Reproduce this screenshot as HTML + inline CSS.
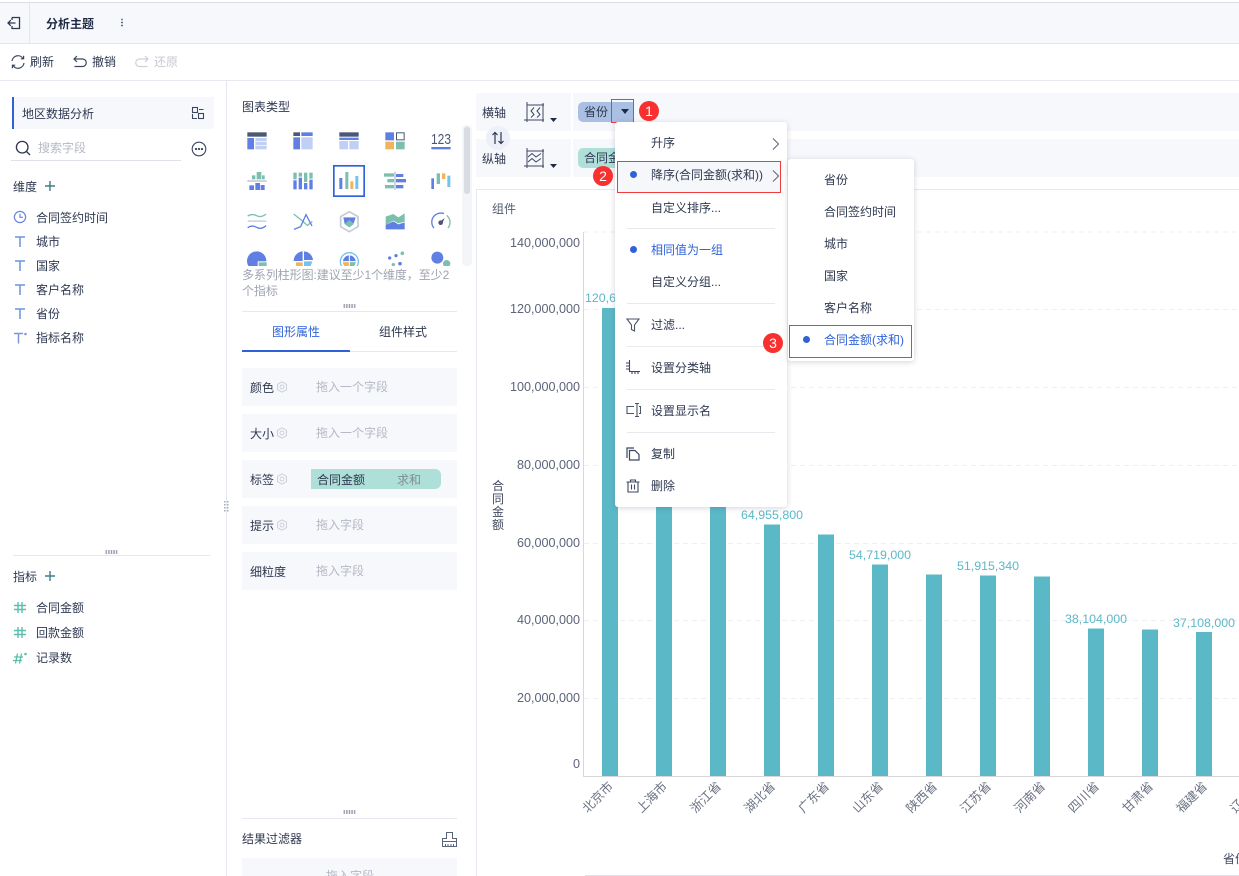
<!DOCTYPE html>
<html><head><meta charset="utf-8">
<style>
html,body{margin:0;padding:0;background:#fff}
body{position:relative;width:1239px;height:876px;overflow:hidden;font:12px/18px "Liberation Sans","Noto Sans CJK SC",sans-serif;color:#2e3850}
.t{position:absolute;white-space:nowrap;line-height:18px;margin-top:1px}
.b{position:absolute}
.g{color:#b5b9c5;margin-top:0}
.blue{color:#2f62d9}
svg{position:absolute;overflow:hidden}
.dot{position:absolute;width:7px;height:7px;border-radius:50%;background:#2f62d9}
.badge{position:absolute;width:20px;height:20px;border-radius:50%;background:#f8302f;color:#fff;text-align:center;line-height:20px;font-size:14px}
.sep{position:absolute;left:627px;width:148px;height:1px;background:#e8e9ef}
.row{position:absolute;left:242px;width:215px;height:38px;background:#f7f8fc}
.grips{position:absolute;width:13px;height:4px;background-image:radial-gradient(circle,#7d8394 .7px,transparent .9px);background-size:2.6px 2px}
</style></head><body>

<!-- top header -->
<div class="b" style="left:0;top:2px;width:1239px;height:1px;background:#dcdee5"></div>
<div class="b" style="left:0;top:3px;width:1239px;height:40px;background:#f7f8fc"></div>
<div class="b" style="left:0;top:43px;width:1239px;height:1px;background:#e4e6ec"></div>
<div class="b" style="left:29px;top:3px;width:1px;height:40px;background:#e4e6ec"></div>
<div class="b" style="left:0;top:80px;width:1239px;height:1px;background:#e8e9f0"></div>
<svg style="left:6px;top:15px" width="16" height="16" viewBox="0 0 16 16" fill="none" stroke="#2e3850" stroke-width="1.3"><path d="M6 2.500H13.500V13.500H6V11M6 5V2.500M9.500 8H2M4.800 5.200L2 8L4.800 10.800"/></svg>
<div class="t" style="left:46px;top:14px;font-weight:bold;color:#1f2a44">分析主题</div>
<svg style="left:119px;top:17px" width="6" height="11"><circle cx="3" cy="2.500" r=".9" fill="#2f62d9"/><circle cx="3" cy="5.500" r=".9" fill="#3b4660"/><circle cx="3" cy="8.500" r=".9" fill="#3b4660"/></svg>

<!-- toolbar -->
<svg style="left:10px;top:54px" width="16" height="16" viewBox="0 0 16 16" fill="none" stroke="#3b4660" stroke-width="1.2"><path d="M2 7A6 6 0 0 1 13 4.500M14 9A6 6 0 0 1 3 11.500"/><path d="M13.600 1.800V4.800H10.800M2.400 14.200V11.200H5.200"/></svg>
<div class="t" style="left:30px;top:52px">刷新</div>
<svg style="left:72px;top:54px" width="16" height="16" viewBox="0 0 16 16" fill="none" stroke="#3b4660" stroke-width="1.2"><path d="M5 2L2 5L5 8M2 5H10.500A3.600 3.600 0 0 1 10.500 12.500H2.500"/></svg>
<div class="t" style="left:92px;top:52px">撤销</div>
<svg style="left:134px;top:54px" width="16" height="16" viewBox="0 0 16 16" fill="none" stroke="#cdd0d8" stroke-width="1.2"><path d="M11 2L14 5L11 8M14 5H5.500A3.600 3.600 0 0 0 5.500 12.500H13.500"/></svg>
<div class="t" style="left:154px;top:52px;color:#c6c9d1">还原</div>

<!-- left panel -->
<div class="b" style="left:226px;top:81px;width:1px;height:795px;background:#e6e8ef"></div>
<div class="b" style="left:12px;top:97px;width:202px;height:32px;background:#f7f8fc"></div>
<div class="b" style="left:12px;top:97px;width:2px;height:32px;background:#2f62d9"></div>
<div class="t" style="left:22px;top:104px">地区数据分析</div>
<svg style="left:191px;top:106px" width="14" height="14" viewBox="0 0 14 14" fill="none" stroke="#3b4660" stroke-width="1.1"><rect x="1.500" y="1.500" width="5" height="5"/><rect x="7.500" y="7.500" width="5" height="5"/><path d="M8 3.500H12.500M1.500 8V12.500H6"/></svg>
<svg style="left:15px;top:140px" width="16" height="16" viewBox="0 0 16 16" fill="none" stroke="#2e3850" stroke-width="1.3"><circle cx="7.200" cy="7.200" r="5.800"/><path d="M11.500 11.500L15 15"/></svg>
<div class="t" style="left:38px;top:138px;color:#b5b9c5">搜索字段</div>
<div class="b" style="left:11px;top:160px;width:170px;height:1px;background:#dfe1e9"></div>
<svg style="left:191px;top:141px" width="16" height="16" viewBox="0 0 16 16" fill="none" stroke="#3b4660" stroke-width="1.1"><circle cx="8" cy="8" r="6.800"/><circle cx="5" cy="8" r=".6" fill="#3b4660"/><circle cx="8" cy="8" r=".6" fill="#3b4660"/><circle cx="11" cy="8" r=".6" fill="#3b4660"/></svg>

<div class="t" style="left:13px;top:177px">维度</div>
<svg style="left:45px;top:181px" width="10" height="10"><path d="M0 5H10M5 0V10" stroke="#3f7c8a" stroke-width="1.400"/></svg>
<svg style="left:13px;top:210px" width="14" height="14" viewBox="0 0 14 14" fill="none" stroke="#6a85dd" stroke-width="1.200"><circle cx="7" cy="7" r="5.600"/><path d="M7 3.800V7.300H10"/></svg>
<div class="t" style="left:36px;top:208px">合同签约时间</div>
<svg style="left:14px;top:236px" width="12" height="11" fill="none" stroke="#6a93dd" stroke-width="1.500"><path d="M1 1H11M6 1V11"/></svg>
<div class="t" style="left:36px;top:232px">城市</div>
<svg style="left:14px;top:260px" width="12" height="11" fill="none" stroke="#6a93dd" stroke-width="1.500"><path d="M1 1H11M6 1V11"/></svg>
<div class="t" style="left:36px;top:256px">国家</div>
<svg style="left:14px;top:284px" width="12" height="11" fill="none" stroke="#6a93dd" stroke-width="1.500"><path d="M1 1H11M6 1V11"/></svg>
<div class="t" style="left:36px;top:280px">客户名称</div>
<svg style="left:14px;top:308px" width="12" height="11" fill="none" stroke="#6a93dd" stroke-width="1.500"><path d="M1 1H11M6 1V11"/></svg>
<div class="t" style="left:36px;top:304px">省份</div>
<svg style="left:13px;top:332px" width="15" height="12" fill="none" stroke="#7f98d8" stroke-width="1.500"><path d="M1 1.500H10M5.500 1.500V11.500"/><circle cx="12.500" cy="2" r="1.300" fill="#7f98d8" stroke="none"/></svg>
<div class="t" style="left:36px;top:328px">指标名称</div>

<div class="grips" style="left:105px;top:550px"></div>
<div class="b" style="left:13px;top:555px;width:197px;height:1px;background:#e6e8ef"></div>
<div class="t" style="left:13px;top:567px">指标</div>
<svg style="left:45px;top:571px" width="10" height="10"><path d="M0 5H10M5 0V10" stroke="#3f7c8a" stroke-width="1.400"/></svg>
<svg style="left:14px;top:602px" width="12" height="11" stroke="#5dbdae" stroke-width="1.400"><path d="M0 3.500H12M0 7.500H12M4 0V11M8 0V11"/></svg>
<div class="t" style="left:36px;top:598px">合同金额</div>
<svg style="left:14px;top:627px" width="12" height="11" stroke="#5dbdae" stroke-width="1.400"><path d="M0 3.500H12M0 7.500H12M4 0V11M8 0V11"/></svg>
<div class="t" style="left:36px;top:623px">回款金额</div>
<svg style="left:13px;top:652px" width="15" height="12" stroke="#5dbdae" stroke-width="1.300" fill="none"><path d="M1 5H10M0 8.500H9M4.500 1.500L2.500 11.500M8.500 1.500L6.500 11.500"/><circle cx="12.500" cy="2" r="1.300" fill="#5dbdae" stroke="none"/></svg>
<div class="t" style="left:36px;top:648px">记录数</div>

<!-- middle panel -->
<div class="b" style="left:476px;top:189px;width:1px;height:687px;background:#e6e8ef"></div>
<div class="t" style="left:242px;top:97px">图表类型</div>

<svg style="left:230px;top:90px" width="250" height="178" viewBox="0 0 750 534">
<rect x="696" y="105" width="30" height="423" rx="12" fill="#f4f5f8"/>
<rect x="702" y="110" width="18" height="202" rx="8" fill="#d9dce3"/>
<!-- row1 -->
<rect x="52" y="127" width="58" height="13" fill="#4a5874"/><rect x="52" y="144" width="20" height="34" fill="#5f80e2"/><rect x="76" y="144" width="34" height="10" fill="#c2cff5"/><rect x="76" y="156" width="34" height="10" fill="#c2cff5"/><rect x="76" y="168" width="34" height="10" fill="#c2cff5"/>
<rect x="190" y="127" width="20" height="11" fill="#4a5874"/><rect x="214" y="127" width="34" height="11" fill="#5f80e2"/><rect x="190" y="142" width="20" height="36" fill="#5f80e2"/><rect x="214" y="142" width="34" height="36" fill="#c2cff5"/>
<rect x="328" y="127" width="58" height="13" fill="#4a5874"/><rect x="328" y="143" width="58" height="7" fill="#5f80e2"/><rect x="328" y="153" width="26" height="25" fill="#c2cff5"/><rect x="358" y="153" width="28" height="25" fill="#c2cff5"/>
<rect x="466" y="127" width="26" height="24" fill="#5f80e2"/><rect x="499.500" y="128.500" width="23" height="21" fill="#fff" stroke="#4a5874" stroke-width="3"/><rect x="466" y="155" width="26" height="23" fill="#f0b45c"/><rect x="498" y="155" width="26" height="23" fill="#7dbfae"/>
<text x="603" y="162" font-size="43" textLength="60" lengthAdjust="spacingAndGlyphs" fill="#4a5874" font-family="Liberation Sans">123</text><rect x="604" y="171" width="58" height="7" fill="#5f80e2"/>
<!-- row2 -->
<rect x="66" y="256" width="10" height="12" fill="#7dbfae"/><rect x="80" y="246" width="14" height="22" fill="#7dbfae"/><rect x="96" y="256" width="8" height="12" fill="#7dbfae"/><rect x="52" y="270" width="58" height="6" fill="#cfd4e0"/><rect x="58" y="286" width="14" height="14" fill="#5f80e2"/><rect x="76" y="279" width="14" height="21" fill="#5f80e2"/><rect x="92" y="285" width="12" height="15" fill="#5f80e2"/>
<rect x="190" y="248" width="10" height="20" fill="#7dbfae"/><rect x="190" y="271" width="10" height="27" fill="#5f80e2"/><rect x="206" y="248" width="10" height="12" fill="#7dbfae"/><rect x="206" y="263" width="10" height="35" fill="#5f80e2"/><rect x="222" y="248" width="10" height="28" fill="#7dbfae"/><rect x="222" y="279" width="10" height="19" fill="#5f80e2"/><rect x="238" y="248" width="10" height="18" fill="#7dbfae"/><rect x="238" y="269" width="10" height="29" fill="#5f80e2"/>
<rect x="300" y="216" width="114" height="114" fill="#f6f7fb" opacity=".55"/>
<rect x="311.500" y="227.500" width="91" height="91" fill="#fff" stroke="#2f62d9" stroke-width="5"/>
<rect x="328" y="264" width="9" height="33" fill="#5f80e2"/><rect x="346" y="246" width="9" height="51" fill="#7dbfae"/><rect x="361" y="274" width="9" height="23" fill="#f0b45c"/><rect x="376" y="258" width="9" height="39" fill="#72c4ef"/>
<rect x="492" y="245" width="6" height="55" fill="#cfd4e0"/><rect x="462" y="250" width="30" height="10" fill="#7dbfae"/><rect x="498" y="252" width="22" height="9" fill="#5f80e2"/><rect x="472" y="267" width="20" height="10" fill="#7dbfae"/><rect x="498" y="267" width="30" height="10" fill="#5f80e2"/><rect x="465" y="285" width="27" height="10" fill="#7dbfae"/><rect x="498" y="285" width="22" height="10" fill="#5f80e2"/>
<rect x="604" y="265" width="8" height="32" fill="#5f80e2"/><rect x="620" y="250" width="10" height="32" fill="#7dbfae"/><rect x="636" y="250" width="10" height="17" fill="#f0b45c"/><rect x="652" y="257" width="9" height="34" fill="#72c4ef"/>
<!-- row3 -->
<path d="M53 378Q66 370 80 377T108 372" fill="none" stroke="#7dbfae" stroke-width="4"/><rect x="53" y="391" width="56" height="5" fill="#cfd4e0"/><path d="M53 413Q66 404 80 412T108 407" fill="none" stroke="#5f80e2" stroke-width="4"/>
<path d="M191 372L216 392L232 406L247 394" fill="none" stroke="#7dbfae" stroke-width="4"/><path d="M192 418L212 410L228 374L246 408" fill="none" stroke="#5f80e2" stroke-width="4"/>
<path d="M358 365L384 380V410L358 425L332 410V380Z" fill="none" stroke="#c5cad6" stroke-width="5"/><path d="M340 382H377L372 398L358 412L344 402Z" fill="#5f80e2"/><path d="M344 402L358 390L372 402L358 412Z" fill="#7dbfae"/>
<path d="M467 380L490 372L505 382L524 370V395L505 400L490 392L467 405Z" fill="#7dbfae"/><path d="M467 405L490 394L505 403L524 397V418H467Z" fill="#5f80e2"/>
<path d="M612 414A27 27 0 0 1 642 371" fill="none" stroke="#5f80e2" stroke-width="4"/><path d="M650 376A27 27 0 0 1 654 414" fill="none" stroke="#7dbfae" stroke-width="4"/><circle cx="632" cy="398" r="7" fill="#4a5874"/><path d="M628 396L644 384L636 402Z" fill="#4a5874"/>
<!-- row4 -->
<circle cx="80" cy="513" r="29" fill="#5f80e2"/><rect x="83" y="514" width="28" height="16" fill="#fff"/><rect x="86" y="517" width="24" height="14" fill="#7dbfae"/>
<path d="M218 513V484A29 29 0 0 0 191 513Z" fill="#5f80e2"/><path d="M222 484A29 29 0 0 1 249 510H222Z" fill="#5f80e2"/><path d="M198 517H218V534H198Z" fill="#f0b45c"/><path d="M222 514H247L240 534H222Z" fill="#72c4ef"/>
<circle cx="358" cy="515" r="27" fill="none" stroke="#72c4ef" stroke-width="4"/><circle cx="358" cy="515" r="19" fill="#5f80e2"/><path d="M358 515H377A19 19 0 0 1 358 534Z" fill="#7dbfae"/><path d="M358 515V534A19 19 0 0 1 339 515Z" fill="#f0b45c"/><path d="M358 494V534M336 515H380" stroke="#fff" stroke-width="3"/>
<circle cx="517" cy="490" r="5.500" fill="#7dbfae"/><circle cx="498" cy="497" r="5" fill="#5f80e2"/><circle cx="479" cy="504" r="5" fill="#5f80e2"/><circle cx="510" cy="521" r="5.500" fill="#5f80e2"/><circle cx="490" cy="524" r="5" fill="#7dbfae"/>
<circle cx="622" cy="503" r="18" fill="#5f80e2"/><circle cx="650" cy="521" r="11" fill="#7dbfae"/>
</svg>
<div class="b" style="left:240px;top:266px;width:222px;height:8px;background:#fff"></div>
<div class="t" style="left:242px;top:266px;color:#9fa4b2;line-height:16px;background:#fff;width:222px;white-space:normal;letter-spacing:-.08px">多系列柱形图:建议至少1个维度，至少2<br>个指标</div>

<div class="grips" style="left:343px;top:304px"></div>
<div class="b" style="left:242px;top:311px;width:215px;height:1px;background:#e6e8ef"></div>
<div class="t blue" style="left:272px;top:322px">图形属性</div>
<div class="t" style="left:379px;top:322px">组件样式</div>
<div class="b" style="left:242px;top:351px;width:215px;height:1px;background:#e6e8ef"></div>
<div class="b" style="left:242px;top:350px;width:108px;height:2px;background:#2f62d9"></div>

<div class="row" style="top:368px"></div><div class="row" style="top:414px"></div><div class="row" style="top:460px"></div><div class="row" style="top:506px"></div><div class="row" style="top:552px"></div>
<div class="t" style="left:250px;top:378px">颜色</div><div class="t" style="left:250px;top:424px">大小</div><div class="t" style="left:250px;top:470px">标签</div><div class="t" style="left:250px;top:516px">提示</div><div class="t" style="left:250px;top:562px">细粒度</div>
<svg style="left:276px;top:381px" width="12" height="12" viewBox="0 0 12 12" fill="none" stroke="#cdd0d9"><path d="M6 .8L10.500 3.400V8.600L6 11.200L1.500 8.600V3.400Z"/><circle cx="6" cy="6" r="2"/></svg>
<svg style="left:276px;top:427px" width="12" height="12" viewBox="0 0 12 12" fill="none" stroke="#cdd0d9"><path d="M6 .8L10.500 3.400V8.600L6 11.200L1.500 8.600V3.400Z"/><circle cx="6" cy="6" r="2"/></svg>
<svg style="left:276px;top:473px" width="12" height="12" viewBox="0 0 12 12" fill="none" stroke="#cdd0d9"><path d="M6 .8L10.500 3.400V8.600L6 11.200L1.500 8.600V3.400Z"/><circle cx="6" cy="6" r="2"/></svg>
<svg style="left:276px;top:519px" width="12" height="12" viewBox="0 0 12 12" fill="none" stroke="#cdd0d9"><path d="M6 .8L10.500 3.400V8.600L6 11.200L1.500 8.600V3.400Z"/><circle cx="6" cy="6" r="2"/></svg>
<div class="t g" style="left:316px;top:378px">拖入一个字段</div>
<div class="t g" style="left:316px;top:424px">拖入一个字段</div>
<div class="b" style="left:311px;top:469px;width:130px;height:20px;background:#aedfd9;border-radius:0 6px 6px 0"></div>
<div class="t" style="left:317px;top:470px">合同金额</div>
<div class="t" style="left:397px;top:470px;color:#7f8f93">求和</div>
<div class="t g" style="left:316px;top:516px">拖入字段</div>
<div class="t g" style="left:316px;top:562px">拖入字段</div>
<div class="grips" style="left:343px;top:810px"></div>
<div class="b" style="left:242px;top:818px;width:215px;height:1px;background:#e6e8ef"></div>
<div class="t" style="left:242px;top:829px">结果过滤器</div>
<svg style="left:442px;top:831px" width="15" height="16" viewBox="0 0 15 16" fill="none" stroke="#5a6579"><path d="M.5 15.500V7.500H4.500V1.500H10.500V7.500H14.500V15.500ZM.5 10.500H14.500M3.500 13V15.500M6 13V15.500M9 13V15.500M11.500 13V15.500"/></svg>
<div class="b" style="left:242px;top:858px;width:215px;height:18px;background:#f7f8fc;overflow:hidden"><div class="t g" style="left:84px;top:9px">拖入字段</div></div>
<svg style="left:224px;top:501px" width="6" height="12"><g fill="#a3a8b5"><rect x="0" y="0" width="1.500" height="1.500"/><rect x="3" y="0" width="1.500" height="1.500"/><rect x="0" y="3" width="1.500" height="1.500"/><rect x="3" y="3" width="1.500" height="1.500"/><rect x="0" y="6" width="1.500" height="1.500"/><rect x="3" y="6" width="1.500" height="1.500"/><rect x="0" y="9" width="1.500" height="1.500"/><rect x="3" y="9" width="1.500" height="1.500"/></g></svg>

<!-- axis rows -->
<div class="b" style="left:476px;top:93px;width:95px;height:38px;background:#f7f8fc"></div>
<div class="b" style="left:573px;top:93px;width:666px;height:38px;background:#f7f8fc"></div>
<div class="b" style="left:476px;top:139px;width:95px;height:38px;background:#f7f8fc"></div>
<div class="b" style="left:573px;top:139px;width:666px;height:38px;background:#f7f8fc"></div>
<div class="t" style="left:482px;top:103px">横轴</div>
<div class="t" style="left:482px;top:149px">纵轴</div>
<div class="b" style="left:486px;top:126px;width:24px;height:24px;border-radius:50%;background:#eef0f9"></div>
<svg style="left:491px;top:131px" width="14" height="14" fill="none" stroke="#2e3850" stroke-width="1.200"><path d="M4 13V1.500M1.500 4L4 1.500L6.500 4M10 1V12.500M7.500 10L10 12.500L12.500 10"/></svg>
<svg style="left:524px;top:102px" width="21" height="21" fill="none" stroke="#3b4660" stroke-width="1"><path d="M3 0V20M0 18H20M3 3H20M19 1V20"/><path d="M10 5.500L7 9L10 12.500L7 15.500M16 5.500L13 9L16 12.500L13 15.500"/></svg>
<svg style="left:550px;top:118px" width="7" height="4"><path d="M0 0H7L3.500 4Z" fill="#1f2a44"/></svg>
<svg style="left:524px;top:148px" width="21" height="21" fill="none" stroke="#3b4660" stroke-width="1"><path d="M3 0V20M0 18H20M3 3H20M19 1V20"/><path d="M4 9L8 5.500L12 9L17 5.500M4 14L8 10.500L12 14L17 10.500"/></svg>
<svg style="left:550px;top:164px" width="7" height="4"><path d="M0 0H7L3.500 4Z" fill="#1f2a44"/></svg>
<div class="b" style="left:578px;top:102px;width:56px;height:20px;background:#a9bfe3;border-radius:5px 0 0 5px"></div>
<div class="t" style="left:584px;top:102px">省份</div>
<div class="b" style="left:611px;top:99px;width:21px;height:22px;border:1px solid #ef3b3b"></div>
<svg style="left:621px;top:109px" width="8" height="5"><path d="M0 0H8L4 5Z" fill="#1f2a44"/></svg>
<div class="badge" style="left:639px;top:101px">1</div>
<div class="b" style="left:578px;top:148px;width:40px;height:20px;background:#aedfd9;border-radius:5px 0 0 5px"></div>
<div class="t" style="left:584px;top:148px">合同金</div>

<!-- chart -->
<div class="b" style="left:476px;top:189px;width:763px;height:1px;background:#e6e8ef"></div>
<div class="t" style="left:492px;top:199px;color:#525b70">组件</div>
<svg style="left:480px;top:225px" width="759" height="651" viewBox="480 225 759 651" font-family="Liberation Sans,Noto Sans CJK SC,sans-serif">
<g stroke="#eeeff2" stroke-dasharray="5 4"><path d="M584 232H1239M584 309.500H1239M584 387.500H1239M584 465.500H1239M584 543.500H1239M584 620.500H1239M584 698.500H1239"/></g>
<path d="M583.500 232V776.500H1239" fill="none" stroke="#d6d8dd"/>
<path d="M585 875.500H1239" stroke="#e3e4e8"/>
<g fill="#5b6478" font-size="12.600" text-anchor="end">
<text x="580" y="247">140,000,000</text><text x="580" y="313">120,000,000</text><text x="580" y="391">100,000,000</text><text x="580" y="469">80,000,000</text><text x="580" y="547">60,000,000</text><text x="580" y="624">40,000,000</text><text x="580" y="702">20,000,000</text><text x="580" y="768">0</text>
</g>
<g fill="#5bb8c7">
<rect x="602" y="308" width="16" height="468"/><rect x="656" y="480" width="16" height="296"/><rect x="710" y="480" width="16" height="296"/><rect x="764" y="524.500" width="16" height="251.500"/><rect x="818" y="534.500" width="16" height="241.500"/><rect x="872" y="564.500" width="16" height="211.500"/><rect x="926" y="574.500" width="16" height="201.500"/><rect x="980" y="575.500" width="16" height="200.500"/><rect x="1034" y="576.500" width="16" height="199.500"/><rect x="1088" y="628.500" width="16" height="147.500"/><rect x="1142" y="629.500" width="16" height="146.500"/><rect x="1196" y="632" width="16" height="144"/>
</g>
<g fill="#5bb8c7" font-size="12.400" text-anchor="middle">
<text x="585" y="302" text-anchor="start">120,6</text><text x="772" y="519">64,955,800</text><text x="880" y="559">54,719,000</text><text x="988" y="570">51,915,340</text><text x="1096" y="623">38,104,000</text><text x="1204" y="627">37,108,000</text>
</g>
<g fill="#6a7182" font-size="12.500" text-anchor="end" font-family="Liberation Sans,Noto Sans CJK SC,sans-serif">
<text transform="translate(614,787) rotate(-45)">北京市</text><text transform="translate(668,787) rotate(-45)">上海市</text><text transform="translate(722,787) rotate(-45)">浙江省</text><text transform="translate(776,787) rotate(-45)">湖北省</text><text transform="translate(830,787) rotate(-45)">广东省</text><text transform="translate(884,787) rotate(-45)">山东省</text><text transform="translate(938,787) rotate(-45)">陕西省</text><text transform="translate(992,787) rotate(-45)">江苏省</text><text transform="translate(1046,787) rotate(-45)">河南省</text><text transform="translate(1100,787) rotate(-45)">四川省</text><text transform="translate(1154,787) rotate(-45)">甘肃省</text><text transform="translate(1208,787) rotate(-45)">福建省</text><text transform="translate(1262,787) rotate(-45)">辽宁省</text>
</g>
<g fill="#3f485c" font-size="12" text-anchor="middle"><text x="498" y="490">合</text><text x="498" y="503">同</text><text x="498" y="516">金</text><text x="498" y="529">额</text></g>
<text x="1223" y="863" fill="#3f485c" font-size="12">省份</text>
</svg>

<!-- menu -->
<div class="b" style="left:615px;top:122px;width:172px;height:385px;background:#fff;border-radius:3px;box-shadow:0 1px 6px rgba(50,60,90,.22)"></div>
<div class="t" style="left:651px;top:133px">升序</div>
<svg style="left:772px;top:138px" width="7" height="12" fill="none" stroke="#5a6579"><path d="M1 .5L6.500 6L1 11.500"/></svg>
<div class="b" style="left:617px;top:161px;width:162px;height:30px;background:#f6f7fa;border:1px solid #ef3b3b"></div>
<div class="dot" style="left:630px;top:171px"></div>
<div class="t" style="left:651px;top:165px">降序(合同金额(求和))</div>
<svg style="left:772px;top:170px" width="7" height="12" fill="none" stroke="#5a6579"><path d="M1 .5L6.500 6L1 11.500"/></svg>
<div class="t" style="left:651px;top:198px">自定义排序...</div>
<div class="sep" style="top:228px"></div>
<div class="dot" style="left:630px;top:246px"></div>
<div class="t blue" style="left:651px;top:240px">相同值为一组</div>
<div class="t" style="left:651px;top:272px">自定义分组...</div>
<div class="sep" style="top:303px"></div>
<svg style="left:626px;top:318px" width="14" height="14" fill="none" stroke="#4a5568" stroke-width="1.100"><path d="M1 1H13L8.500 7V13L5.500 11.500V7Z"/></svg>
<div class="t" style="left:651px;top:315px">过滤...</div>
<div class="sep" style="top:346px"></div>
<svg style="left:626px;top:360px" width="14" height="14" fill="none" stroke="#3b4660" stroke-width="1.100"><path d="M3.500 0V11.500H14M0 3H3M0 6H3M0 9H3M6 12V14M9 12V14M12 12V14"/></svg>
<div class="t" style="left:651px;top:358px">设置分类轴</div>
<div class="sep" style="top:389px"></div>
<svg style="left:626px;top:403px" width="15" height="14" fill="none" stroke="#4a5568" stroke-width="1.100"><path d="M8 3.500H1V10.500H8M11 .5V13.500M9 .5H13M9 13.500H13M13 3.500H14.500V10.500H13"/></svg>
<div class="t" style="left:651px;top:401px">设置显示名</div>
<div class="sep" style="top:432px"></div>
<svg style="left:626px;top:447px" width="14" height="14" fill="none" stroke="#3b4660" stroke-width="1.200"><path d="M1 11V1H8M3.500 3.500H9L13 7.500V13H3.500Z"/></svg>
<div class="t" style="left:651px;top:444px">复制</div>
<svg style="left:626px;top:479px" width="14" height="14" fill="none" stroke="#3b4660" stroke-width="1.100"><path d="M.5 3H13.500M4.500 3V1H9.500V3M2 3V13H12V3M5.500 5.500V10.500M8.500 5.500V10.500"/></svg>
<div class="t" style="left:651px;top:476px">删除</div>

<!-- submenu -->
<div class="b" style="left:788px;top:159px;width:126px;height:202px;background:#fff;border-radius:3px;box-shadow:0 1px 6px rgba(50,60,90,.22)"></div>
<div class="t" style="left:824px;top:170px">省份</div>
<div class="t" style="left:824px;top:202px">合同签约时间</div>
<div class="t" style="left:824px;top:234px">城市</div>
<div class="t" style="left:824px;top:266px">国家</div>
<div class="t" style="left:824px;top:298px">客户名称</div>
<div class="b" style="left:789px;top:325px;width:121px;height:31px;border:1px solid #ef3b3b"></div>
<div class="dot" style="left:803px;top:336px"></div>
<div class="t blue" style="left:824px;top:330px">合同金额(求和)</div>

<div class="badge" style="left:593px;top:166px">2</div>
<div class="badge" style="left:763px;top:333px">3</div>
</body></html>
